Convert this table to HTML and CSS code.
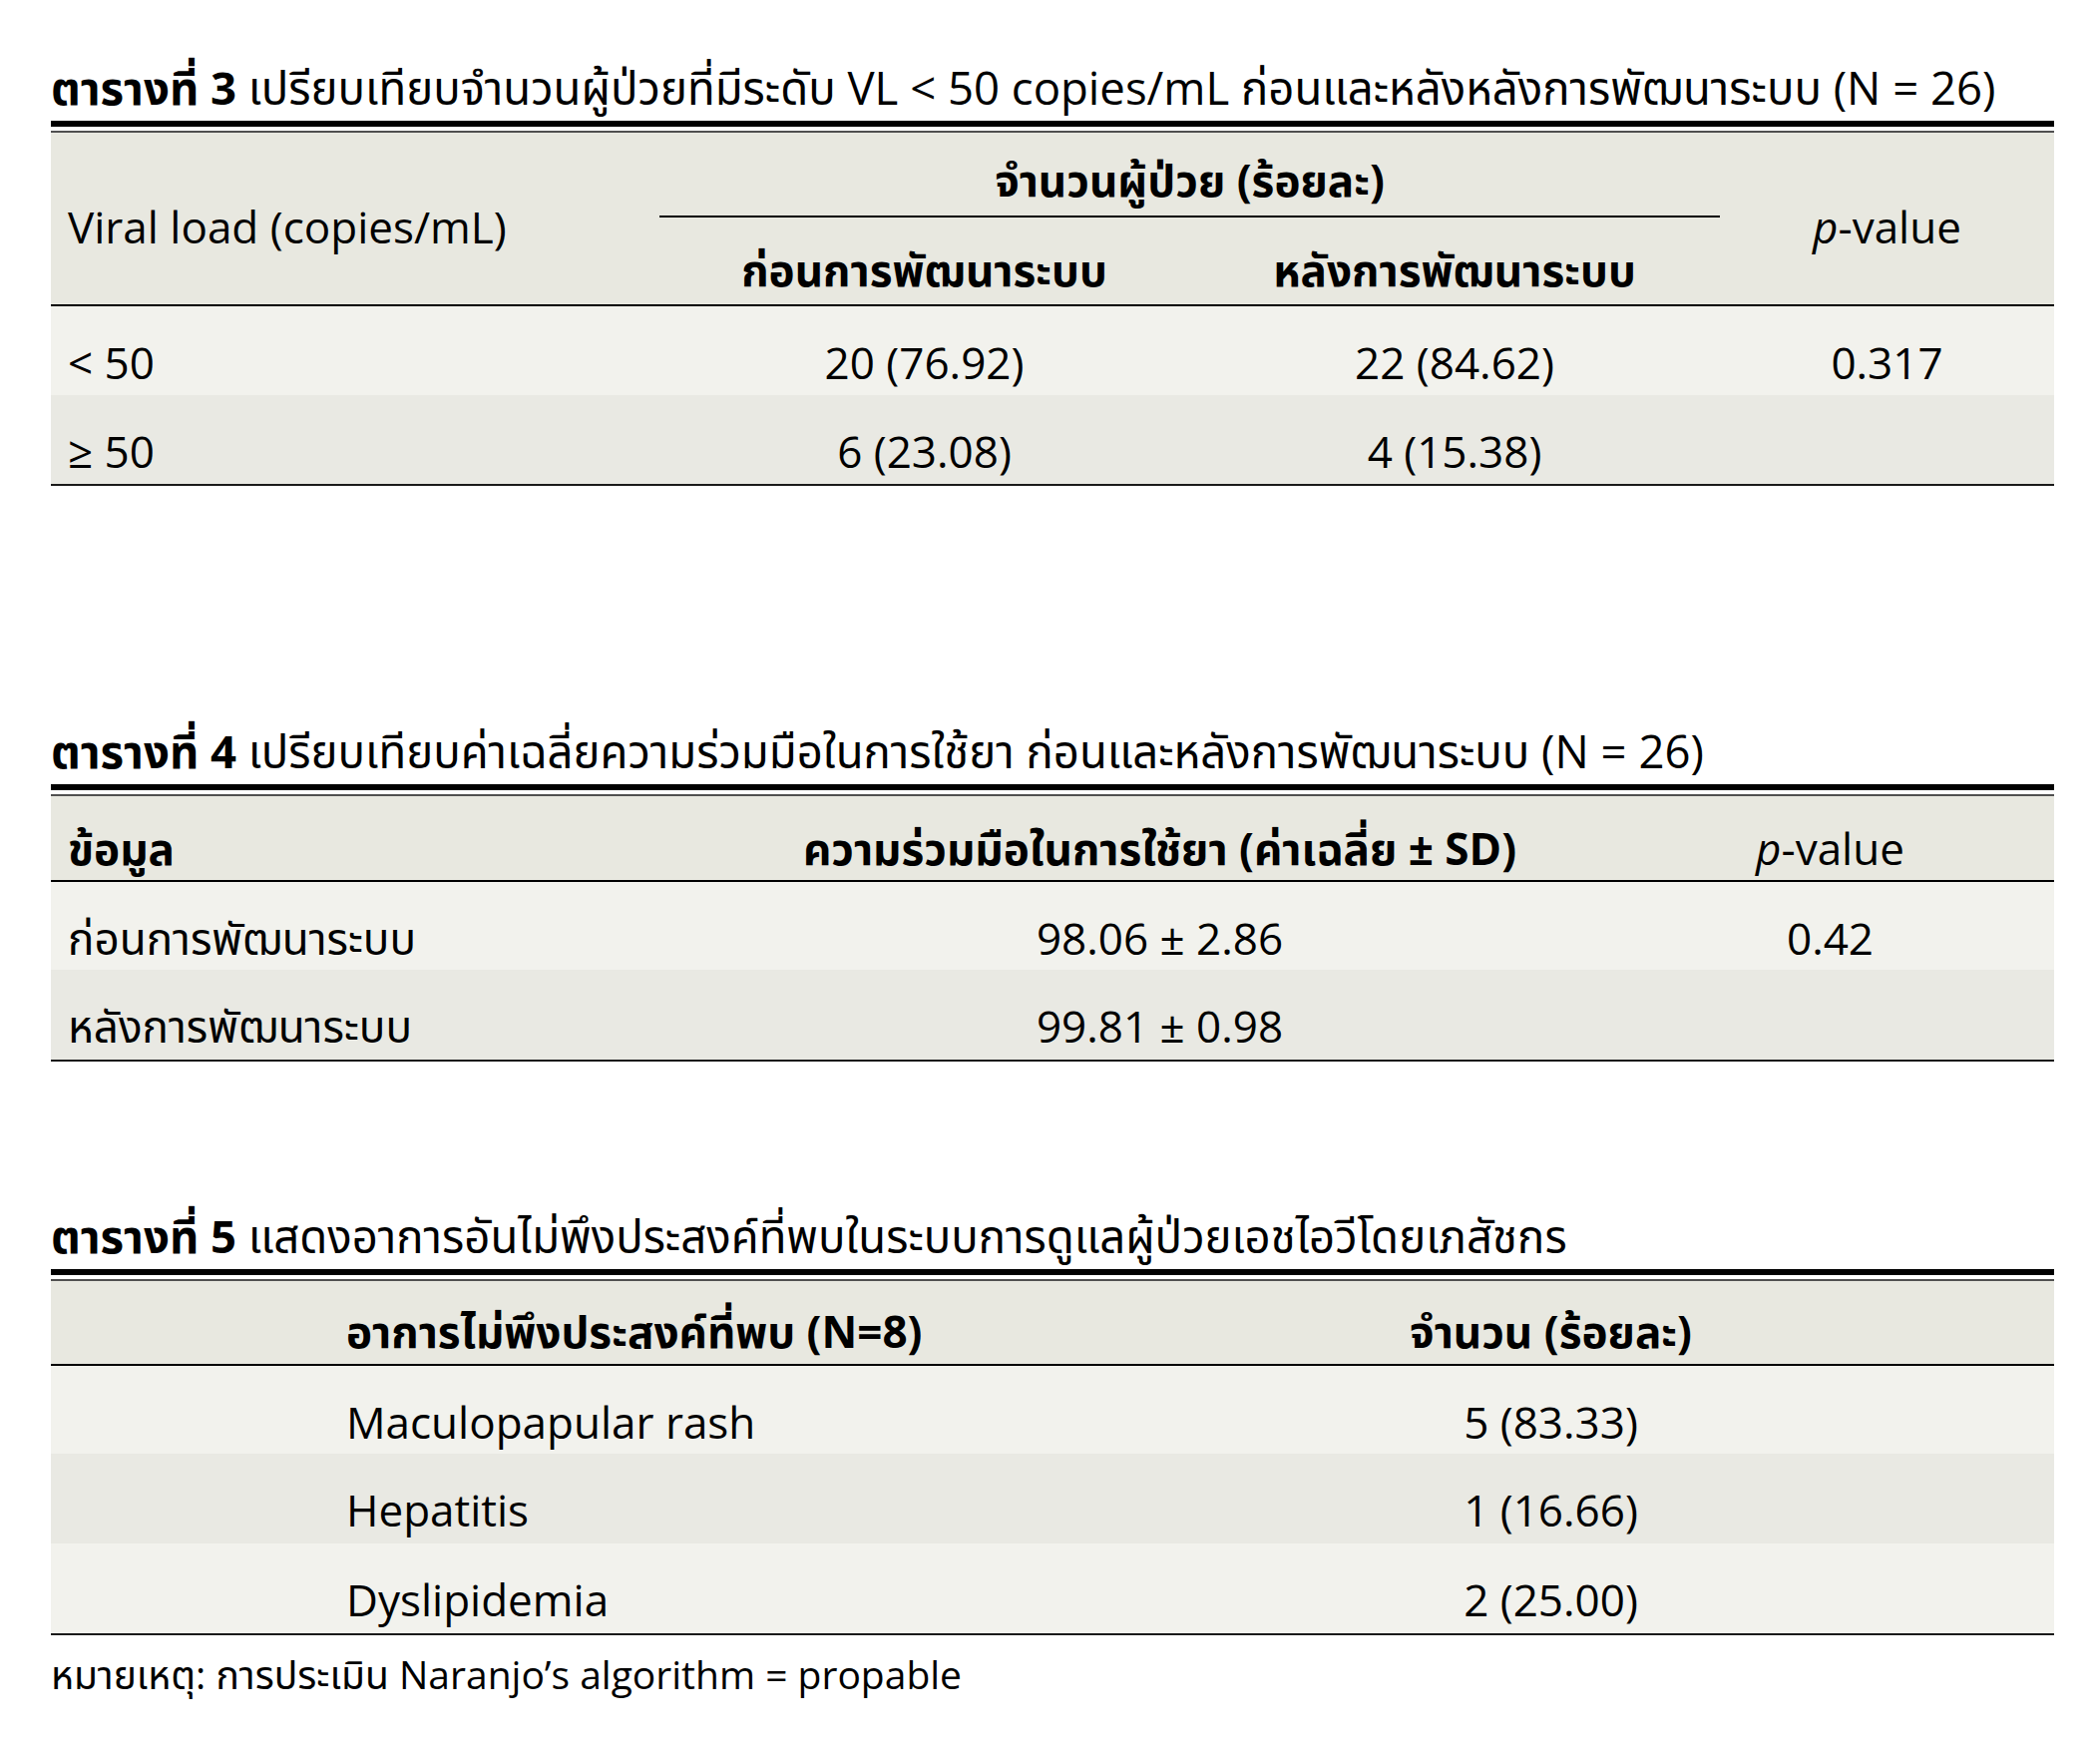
FILE: index.html
```html
<!DOCTYPE html>
<html lang="th">
<head>
<meta charset="utf-8">
<title>ตาราง</title>
<link rel="stylesheet" href="styles.css">
</head>
<body>
<div class="page">

  <section class="block b3">
    <p class="caption"><b>ตารางที่ 3</b> เปรียบเทียบจำนวนผู้ป่วยที่มีระดับ VL &lt; 50 copies/mL ก่อนและหลังหลังการพัฒนาระบบ (N = 26)</p>
    <div class="rule"></div>
    <div class="grid g3">
      <div class="c hd span2 left tall"><span>Viral load (copies/mL)</span></div>
      <div class="c hd group bold"><span>จำนวนผู้ป่วย (ร้อยละ)</span></div>
      <div class="c hd span2 tall pv"><span><i>p</i>-value</span></div>
      <div class="c hd sub bold"><span>ก่อนการพัฒนาระบบ</span></div>
      <div class="c hd sub bold"><span>หลังการพัฒนาระบบ</span></div>

      <div class="c r1 left"><span>&lt; 50</span></div>
      <div class="c r1"><span>20 (76.92)</span></div>
      <div class="c r1"><span>22 (84.62)</span></div>
      <div class="c r1"><span>0.317</span></div>

      <div class="c r2 last left"><span>≥ 50</span></div>
      <div class="c r2 last"><span>6 (23.08)</span></div>
      <div class="c r2 last"><span>4 (15.38)</span></div>
      <div class="c r2 last"><span></span></div>
    </div>
  </section>

  <section class="block b4">
    <p class="caption"><b>ตารางที่ 4</b> เปรียบเทียบค่าเฉลี่ยความร่วมมือในการใช้ยา ก่อนและหลังการพัฒนาระบบ (N = 26)</p>
    <div class="rule"></div>
    <div class="grid g4">
      <div class="c hd sub left bold"><span>ข้อมูล</span></div>
      <div class="c hd sub bold"><span>ความร่วมมือในการใช้ยา (ค่าเฉลี่ย ± SD)</span></div>
      <div class="c hd sub"><span><i>p</i>-value</span></div>

      <div class="c r1 left"><span>ก่อนการพัฒนาระบบ</span></div>
      <div class="c r1"><span>98.06 ± 2.86</span></div>
      <div class="c r1"><span>0.42</span></div>

      <div class="c r2 last left"><span>หลังการพัฒนาระบบ</span></div>
      <div class="c r2 last"><span>99.81 ± 0.98</span></div>
      <div class="c r2 last"><span></span></div>
    </div>
  </section>

  <section class="block b5">
    <p class="caption"><b>ตารางที่ 5</b> แสดงอาการอันไม่พึงประสงค์ที่พบในระบบการดูแลผู้ป่วยเอชไอวีโดยเภสัชกร</p>
    <div class="rule"></div>
    <div class="grid g5">
      <div class="c hd sub"><span></span></div>
      <div class="c hd sub left bold"><span>อาการไม่พึงประสงค์ที่พบ (N=8)</span></div>
      <div class="c hd sub bold"><span>จำนวน (ร้อยละ)</span></div>

      <div class="c r1"><span></span></div>
      <div class="c r1 left"><span>Maculopapular rash</span></div>
      <div class="c r1"><span>5 (83.33)</span></div>

      <div class="c r2"><span></span></div>
      <div class="c r2 left"><span>Hepatitis</span></div>
      <div class="c r2"><span>1 (16.66)</span></div>

      <div class="c r1 last"><span></span></div>
      <div class="c r1 last left"><span>Dyslipidemia</span></div>
      <div class="c r1 last"><span>2 (25.00)</span></div>
    </div>
    <p class="note">หมายเหตุ: การประเมิน Naranjo’s algorithm = propable</p>
  </section>

</div>
</body>
</html>
```

FILE: styles.css
```css
* { box-sizing: border-box; }

html, body {
  margin: 0;
  padding: 0;
  background: #ffffff;
}

body {
  font-family: "Open Sans", "Noto Sans Thai", "Noto Sans Thai UI", "Loma", "Garuda", "Noto Sans", sans-serif;
  color: #000000;
}

.page {
  width: 2008px;
  margin-left: 51px;
}

.block { display: block; }
.b3 { padding-top: 57px; }
.b4 { margin-top: 235px; }
.b5 { margin-top: 144px; }

.caption {
  margin: 0 0 4px 0;
  height: 60px;
  font-size: 45.5px;
  line-height: 60px;
  white-space: nowrap;
  font-weight: 400;
}
.caption b { font-weight: 700; }

.rule {
  height: 12px;
  border-top: 6px solid #000000;
  border-bottom: 2px solid #505050;
}

.grid {
  display: grid;
  font-size: 44px;
  line-height: 44px;
}

.g3 {
  grid-template-columns: 610px 531px 532px 335px;
  grid-template-rows: 85px 89px 89px 91px;
}
.g4 {
  grid-template-columns: 664px 895px 449px;
  grid-template-rows: 86px 88px 92px;
}
.g5 {
  grid-template-columns: 279px 720px 1009px;
  grid-template-rows: 85px 88px 90px 92px;
}

.c {
  display: flex;
  justify-content: center;
  align-items: flex-start;
  padding-top: 34px;
  white-space: nowrap;
}
.c.left {
  justify-content: flex-start;
  padding-left: 17px;
}

.hd { background: #e8e8e0; }
.r1 { background: #f2f2ed; }
.r2 { background: #e9e9e3; }

.bold { font-weight: 700; }

.span2 { grid-row: span 2; border-bottom: 2px solid #000000; }
.tall { padding-top: 72px; }
.group {
  grid-column: span 2;
  border-bottom: 2px solid #000000;
  padding-top: 25px;
}
.sub {
  border-bottom: 2px solid #000000;
  padding-top: 30px;
}
.g5 .sub { padding-top: 28px; }
.last { border-bottom: 2px solid #1a1a1a; }

.note {
  margin: 14px 0 0 0;
  font-size: 39px;
  line-height: 50px;
  white-space: nowrap;
}
```
